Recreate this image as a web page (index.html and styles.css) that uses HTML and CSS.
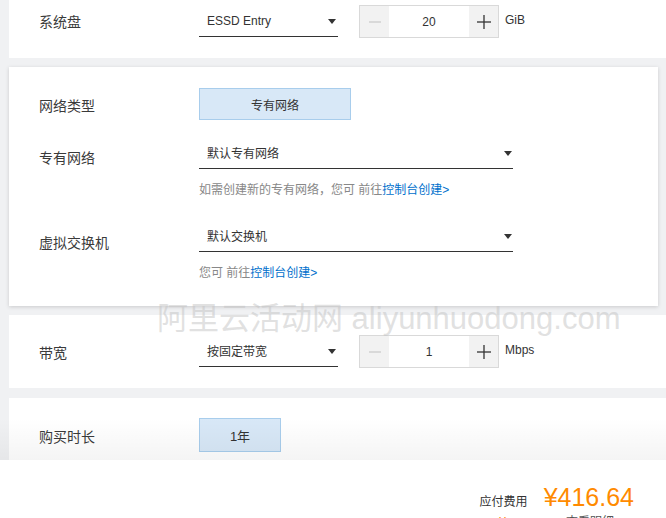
FILE: index.html
```html
<!DOCTYPE html>
<html lang="zh-CN">
<head>
<meta charset="utf-8">
<title>配置</title>
<link rel="stylesheet" href="styles.css">
</head>
<body>
<div class="page">
  <section class="panel panel-disk">
    <div class="row">
      <div class="label">系统盘</div>
      <div class="select select-sm"><span>ESSD Entry</span><i class="caret"></i></div>
      <div class="stepper">
        <span class="step step-minus"><svg width="12" height="2" viewBox="0 0 12 2"><line x1="0" y1="1" x2="12" y2="1" stroke="#c8c8c8" stroke-width="1.2"/></svg></span>
        <span class="val">20</span>
        <span class="step step-plus"><svg width="14" height="14" viewBox="0 0 14 14"><line x1="0" y1="7" x2="14" y2="7" stroke="#333" stroke-width="1.3"/><line x1="7" y1="0" x2="7" y2="14" stroke="#333" stroke-width="1.3"/></svg></span>
      </div>
      <span class="unit">GiB</span>
    </div>
  </section>

  <section class="panel panel-net">
    <div class="row">
      <div class="label">网络类型</div>
      <div class="btn btn-net">专有网络</div>
    </div>
    <div class="row row-vpc">
      <div class="label label-vpc">专有网络</div>
      <div class="field">
        <div class="select select-lg"><span>默认专有网络</span><i class="caret"></i></div>
        <p class="hint">如需创建新的专有网络，您可 前往<a class="link">控制台创建&gt;</a></p>
      </div>
    </div>
    <div class="row row-vsw">
      <div class="label label-vsw">虚拟交换机</div>
      <div class="field">
        <div class="select select-lg"><span>默认交换机</span><i class="caret"></i></div>
        <p class="hint">您可 前往<a class="link">控制台创建&gt;</a></p>
      </div>
    </div>
  </section>

  <section class="panel panel-bw">
    <div class="row">
      <div class="label">带宽</div>
      <div class="select select-sm"><span>按固定带宽</span><i class="caret"></i></div>
      <div class="stepper">
        <span class="step step-minus"><svg width="12" height="2" viewBox="0 0 12 2"><line x1="0" y1="1" x2="12" y2="1" stroke="#c8c8c8" stroke-width="1.2"/></svg></span>
        <span class="val">1</span>
        <span class="step step-plus"><svg width="14" height="14" viewBox="0 0 14 14"><line x1="0" y1="7" x2="14" y2="7" stroke="#333" stroke-width="1.3"/><line x1="7" y1="0" x2="7" y2="14" stroke="#333" stroke-width="1.3"/></svg></span>
      </div>
      <span class="unit">Mbps</span>
    </div>
  </section>

  <section class="panel panel-time">
    <div class="row">
      <div class="label label-time">购买时长</div>
      <div class="btn btn-year">1年</div>
    </div>
  </section>
</div>

<div class="watermark">阿里云活动网 aliyunhuodong.com</div>

<footer class="footer">
  <div class="price-line">
    <span class="price-label">应付费用</span>
    <span class="price">¥416.64</span>
  </div>
  <div class="sub-line">
    <span class="sub-orange">¥</span>
    <span class="sub-grey">查看明细</span>
  </div>
</footer>
</body>
</html>
```

FILE: styles.css
```css
* { box-sizing: border-box; }

html, body {
  margin: 0;
  padding: 0;
}

body {
  background: #f0f1f3;
  font-family: "Liberation Sans", "Noto Sans CJK SC", sans-serif;
  color: #333;
  width: 666px;
  height: 518px;
  overflow: hidden;
  position: relative;
}

.page {
  padding-left: 9px;
}

.panel {
  background: #fff;
  padding-left: 30px;
}

.panel-disk {
  padding-top: 5px;
  padding-bottom: 20px;
}

.panel-net {
  margin-top: 9px;
  margin-right: 8px;
  padding-top: 21px;
  padding-bottom: 24px;
  box-shadow: 0 1px 4px rgba(0, 0, 0, 0.16);
  position: relative;
}

.panel-bw {
  margin-top: 9px;
  padding-top: 20px;
  padding-bottom: 20px;
}

.panel-time {
  margin-top: 10px;
  padding-top: 20px;
  padding-bottom: 20px;
}

.row {
  display: flex;
  align-items: flex-start;
}

.row-vpc { margin-top: 17px; }
.row-vsw { margin-top: 21px; }

.label {
  width: 160px;
  flex: none;
  font-size: 14px;
  line-height: 20px;
  padding-top: 7px;
  color: #3a3a3a;
}

.label-vpc { padding-top: 11px; }
.label-vsw { padding-top: 13px; }
.label-time { padding-top: 9px; }
.panel-net .row:first-child .label { padding-top: 8px; }
.panel-bw .label { padding-top: 8px; }

.select {
  height: 32px;
  border-bottom: 1px solid #333;
  display: flex;
  align-items: center;
  justify-content: space-between;
  padding-left: 8px;
  padding-right: 1px;
  font-size: 12px;
  color: #333;
}

.select-sm { width: 139px; padding-right: 2px; }
.select-lg { width: 314px; }

.caret {
  width: 0;
  height: 0;
  border-left: 4px solid transparent;
  border-right: 4px solid transparent;
  border-top: 5px solid #333;
  margin-top: 1px;
}

.stepper {
  margin-left: 21px;
  width: 140px;
  height: 33px;
  border: 1px solid #d9d9d9;
  display: flex;
  background: #fff;
}

.step {
  width: 29px;
  flex: none;
  background: #f2f2f2;
  display: flex;
  align-items: center;
  justify-content: center;
}

.val {
  flex: 1;
  display: flex;
  align-items: center;
  justify-content: center;
  font-size: 12px;
  color: #333;
}

.unit {
  margin-left: 6px;
  font-size: 12px;
  line-height: 30px;
  color: #333;
}

.btn {
  background: #d8e8f7;
  border: 1px solid #a8cdec;
  display: flex;
  align-items: center;
  justify-content: center;
  font-size: 12px;
  color: #333;
}

.btn-net { width: 152px; height: 32px; }
.btn-year { width: 82px; height: 34px; font-size: 13px; }

.field {
  display: flex;
  flex-direction: column;
}

.hint {
  margin: 12px 0 0;
  font-size: 12px;
  line-height: 18px;
  color: #888;
}

.link {
  color: #0070cc;
  text-decoration: none;
}

.watermark {
  position: absolute;
  left: 157px;
  top: 299px;
  font-family: "Liberation Sans", "Noto Sans CJK SC", sans-serif;
  font-size: 31px;
  line-height: 40px;
  color: rgba(195, 195, 195, 0.5);
  white-space: nowrap;
  pointer-events: none;
  z-index: 5;
}

.footer {
  position: absolute;
  left: 0;
  right: 0;
  bottom: 0;
  height: 58px;
  background: #fff;
  z-index: 10;
  padding-top: 22px;
  padding-right: 32px;
}

.footer::before {
  content: "";
  position: absolute;
  left: 0;
  right: 0;
  top: -42px;
  height: 42px;
  background: linear-gradient(rgba(0, 0, 0, 0), rgba(0, 0, 0, 0.045));
}

.price-line {
  display: flex;
  justify-content: flex-end;
  align-items: baseline;
}

.price-label {
  font-size: 12px;
  color: #333;
  margin-right: 16px;
}

.price {
  font-size: 25px;
  line-height: 30px;
  color: #ff8a00;
}

.sub-line {
  display: flex;
  justify-content: flex-end;
  align-items: baseline;
  font-size: 12px;
  line-height: 14px;
  padding-top: 3px;
  padding-right: 20px;
}

.sub-orange {
  color: #ff8a00;
  margin-right: 60px;
}

.sub-grey {
  color: #555;
}
```
